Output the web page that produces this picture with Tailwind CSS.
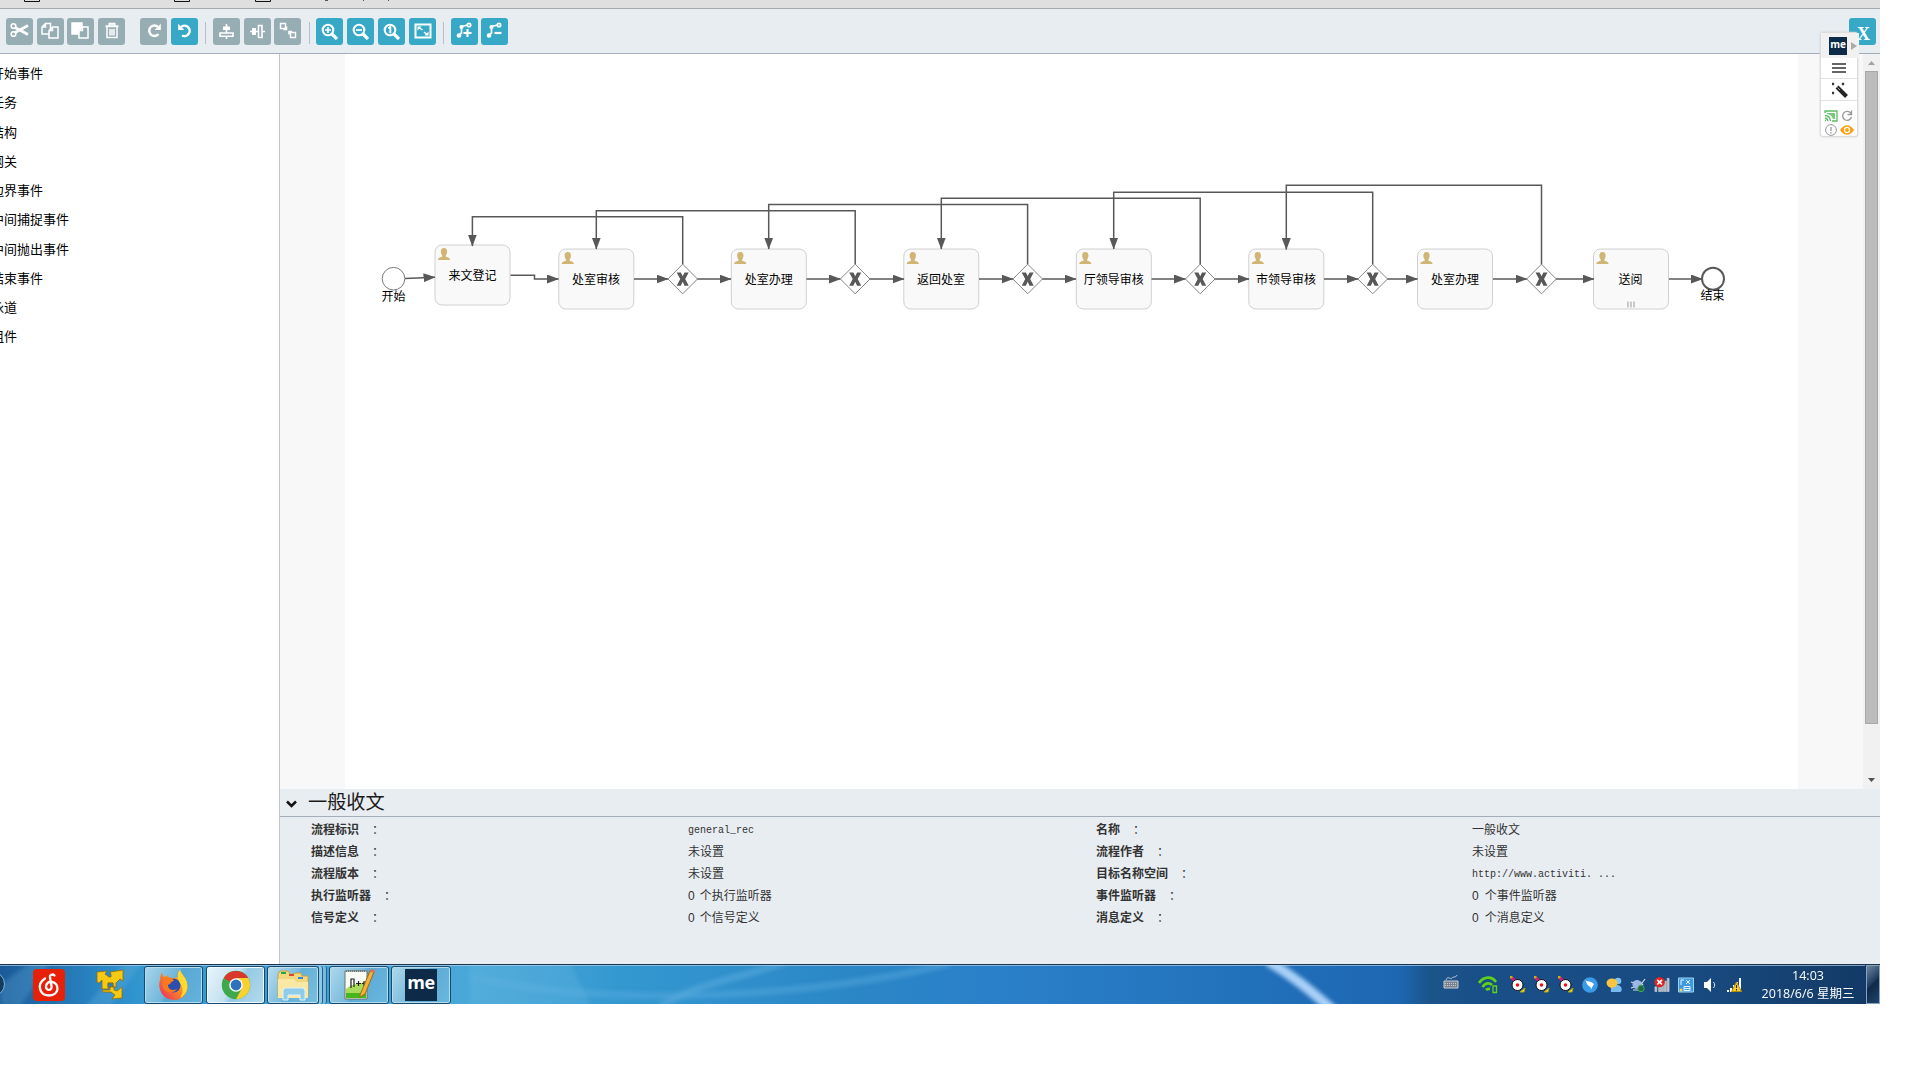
<!DOCTYPE html>
<html lang="zh-CN">
<head>
<meta charset="utf-8">
<title>一般收文</title>
<script src="https://cdn.jsdelivr.net/npm/@tailwindcss/browser@4"></script>
</head>
<body class="w-[1920px] h-[1080px] overflow-hidden bg-white font-['Liberation_Sans','Noto_Sans_CJK_SC',sans-serif] text-black">
<div class="relative w-[1880px] h-[1004px] flex flex-col overflow-hidden">

  <!-- bottom edge of the browser's bookmark bar -->
  <div class="h-[9px] shrink-0 bg-[#dfdfdf] border-b border-[#a3a9ae]">
    <svg class="block" width="420" height="8" fill="none" stroke="#111"><path d="M24.500-3V1.500h15V-3M174.500-3V1.500h15V-3M255.500-3V1.500h15V-3"/><path d="M325 .5h3M363.500 0v1M388.500 0v1" stroke="#54506a"/></svg>
  </div>

  <!-- toolbar -->
  <div class="h-[45px] shrink-0 bg-[#e8edf1] border-b border-[#a4adba] flex items-start justify-between pt-[9px] pl-[6px] pr-1">
    <div class="flex items-start text-white">
      <div class="w-[27px] h-[27px] pb-[2px] rounded-[3px] bg-[#95adb3] flex items-center justify-center mr-1"><svg width="19" height="17" viewBox="0 0 19 17" fill="none" stroke="#fff" stroke-width="2"><circle cx="3.500" cy="4" r="2.300" stroke-width="1.600"/><circle cx="3.500" cy="12" r="2.300" stroke-width="1.600"/><path d="M5 5.500 18 12.500M5 10.500 18 3.500" stroke-width="2.800"/></svg></div>
      <div class="w-[27px] h-[27px] pb-[2px] pr-[2px] rounded-[3px] bg-[#95adb3] flex items-center justify-center mr-[3px]"><svg width="18" height="18" viewBox="0 0 18 18" fill="#95adb3" stroke="#fff" stroke-width="1.500"><path d="M4.500 1.500H9.500V12H1V5zM4.500 1.500V5H1"/><path d="M11.500 5H17V16H8V8.500zM11.500 5V8.500H8"/></svg></div>
      <div class="w-[27px] h-[27px] pb-[2px] pr-[2px] rounded-[3px] bg-[#95adb3] flex items-center justify-center mr-1"><svg width="18" height="18" viewBox="0 0 18 18" fill="#95adb3" stroke="#fff" stroke-width="1.500"><path d="M1 1h10v11H1z" fill="#fff"/><path d="M11.500 5H17V16H8V8.500zM11.500 5V8.500H8"/></svg></div>
      <div class="w-[27px] h-[27px] pb-[2px] rounded-[3px] bg-[#95adb3] flex items-center justify-center mr-[15px]"><svg width="16" height="18" viewBox="0 0 16 18" fill="none" stroke="#fff" stroke-width="1.500"><path d="M1.500 4.200h13M5.500 4V1.700h5V4" stroke-width="2"/><path d="M3 5v10.500h10V5M6 7v6.500M8 7v6.500M10 7v6.500"/></svg></div>
      <div class="w-[27px] h-[27px] pb-[2px] rounded-[3px] bg-[#95adb3] flex items-center justify-center mr-1"><svg width="16" height="16" viewBox="0 0 16 16" fill="none" stroke="#fff" stroke-width="2.500"><path d="M12.500 4.500A5.200 5.200 0 1 0 12.500 11"/><path d="M14.800.8V7H8.600z" fill="#fff" stroke="none"/></svg></div>
      <div class="w-[27px] h-[27px] pb-[2px] rounded-[3px] bg-[#37a8c6] flex items-center justify-center mr-[7px]"><svg width="16" height="16" viewBox="0 0 16 16" fill="none" stroke="#fff" stroke-width="2.500"><path d="M3.500 4.500A5.200 5.200 0 1 1 5 12.500"/><path d="M1.200.8V7h6.200z" fill="#fff" stroke="none"/></svg></div>
      <div class="w-px h-[22px] mt-1 mr-[7px] bg-[#b8bfc9]"></div>
      <div class="w-[27px] h-[27px] pb-px rounded-[3px] bg-[#95adb3] flex items-center justify-center mr-1"><svg width="15" height="15" viewBox="0 0 15 15" fill="none" stroke="#fff" stroke-width="1.600"><path d="M7.500 0v9M7.500 12.500V15"/><path d="M4 2.500h7v3.500H4z" fill="#fff" stroke="none"/><path d="M1 9h13v3.300H1z"/></svg></div>
      <div class="w-[27px] h-[27px] pb-px rounded-[3px] bg-[#95adb3] flex items-center justify-center mr-[3px]"><svg width="15" height="15" viewBox="0 0 15 15" fill="none" stroke="#fff" stroke-width="1.600"><path d="M0 7.500h8M12 7.500h3"/><path d="M2 4h4v7H2z" fill="#fff" stroke="none"/><path d="M8.500 1.500h3.500v12H8.500z"/></svg></div>
      <div class="w-[27px] h-[27px] pb-[2px] rounded-[3px] bg-[#95adb3] flex items-center justify-center mr-2"><svg width="18" height="17" viewBox="0 0 18 17" fill="none" stroke="#fff" stroke-width="1.400"><path d="M1.500 1.500h5v5h-5zM11.500 10.500h5v5h-5z"/><path d="M4.500 7.500h3v-3M10 12.500v-3h3" stroke-width="1.600"/></svg></div>
      <div class="w-px h-[22px] mt-1 mr-[6px] bg-[#b8bfc9]"></div>
      <div class="w-[27px] h-[27px] pb-px rounded-[3px] bg-[#37a8c6] flex items-center justify-center mr-1"><svg width="17" height="17" viewBox="0 0 17 17" fill="none" stroke="#fff"><circle cx="7" cy="7" r="5.300" stroke-width="2.100"/><path d="m11 11 5 5" stroke-width="3.200"/><path d="M7 4v6M4 7h6" stroke-width="1.700"/></svg></div>
      <div class="w-[27px] h-[27px] pb-px rounded-[3px] bg-[#37a8c6] flex items-center justify-center mr-1"><svg width="17" height="17" viewBox="0 0 17 17" fill="none" stroke="#fff"><circle cx="7" cy="7" r="5.300" stroke-width="2.100"/><path d="m11 11 5 5" stroke-width="3.200"/><path d="M4 7h6" stroke-width="1.700"/></svg></div>
      <div class="w-[27px] h-[27px] pb-px rounded-[3px] bg-[#37a8c6] flex items-center justify-center mr-1"><svg width="17" height="17" viewBox="0 0 17 17" fill="none" stroke="#fff"><circle cx="7" cy="7" r="5.300" stroke-width="2.100"/><path d="m11 11 5 5" stroke-width="3.200"/><path d="M5.300 5.300 7.300 4V10.300" stroke-width="1.900"/></svg></div>
      <div class="w-[27px] h-[27px] pb-[2px] rounded-[3px] bg-[#37a8c6] flex items-center justify-center mr-[7px]"><svg width="18" height="16" viewBox="0 0 18 16" fill="none" stroke="#fff" stroke-width="2"><path d="M1.500 1.500h15v13h-15z"/><path d="m5 4.500 3.500 2.500M10 9l3 2.500" stroke-width="1.500"/><path d="M3.500 3.500h4l-4 4zM14.500 12.500h-4l4-4z" fill="#fff" stroke="none"/></svg></div>
      <div class="w-px h-[22px] mt-1 mr-[7px] bg-[#b8bfc9]"></div>
      <div class="w-[27px] h-[27px] pb-[2px] rounded-[3px] bg-[#37a8c6] flex items-center justify-center mr-[3px]"><svg width="17" height="17" viewBox="0 0 17 17" fill="none" stroke="#fff" stroke-width="1.700"><path d="M3 13 5.500 11V4.500L12 3"/><circle cx="13" cy="3" r="1.700" fill="#37a8c6"/><circle cx="3" cy="13.500" r="1.500" fill="#fff"/><circle cx="5.500" cy="5" r="1.200" fill="#fff"/><path d="M11.500 7v8M7.500 11h8" stroke-width="2.200"/></svg></div>
      <div class="w-[27px] h-[27px] pb-[2px] rounded-[3px] bg-[#37a8c6] flex items-center justify-center"><svg width="17" height="17" viewBox="0 0 17 17" fill="none" stroke="#fff" stroke-width="1.700"><path d="M3 13 5.500 11V4.500L12 3"/><circle cx="13" cy="3" r="1.700" fill="#37a8c6"/><circle cx="3" cy="13.500" r="1.500" fill="#fff"/><circle cx="5.500" cy="5" r="1.200" fill="#fff"/><path d="M8.500 11h7" stroke-width="2.200"/></svg></div>
    </div>
    <div class="w-[27px] h-[27px] rounded-[3px] bg-[#37a8c6] flex items-center justify-center pt-[4px] pl-[2px] text-white font-['Liberation_Serif',serif] font-bold text-[18px] leading-none">X</div>
  </div>

  <!-- main area -->
  <div class="flex h-[910px] shrink-0">
    <div class="w-[280px] shrink-0 border-r border-[#c3c6cc] overflow-hidden pt-[5px] text-[13px] leading-[29.250px] whitespace-nowrap">
      <div class="-ml-[9px]">
        <div>开始事件</div><div>任务</div><div>结构</div><div>网关</div><div>边界事件</div><div>中间捕捉事件</div><div>中间抛出事件</div><div>结束事件</div><div>泳道</div><div>组件</div>
      </div>
    </div>

    <div class="flex flex-col flex-1">
      <div class="flex h-[735px] shrink-0 bg-[#f8f8f8]">
        <div class="w-[1583px] pl-[65px]">
          <!-- process diagram; user units are window pixels -->
          <svg class="block bg-white" width="1453" height="735" viewBox="345 54 1453 735" font-family="'Liberation Sans','Noto Sans CJK SC',sans-serif" font-size="12" text-anchor="middle">
            <defs>
              <marker id="a" markerWidth="12" markerHeight="9" refX="11.500" refY="4.500" orient="auto" markerUnits="userSpaceOnUse"><path d="M0 0 12 4.500 0 9z" fill="#585858"/></marker>
              <g id="t"><rect x=".5" y=".5" width="75" height="60" rx="7" fill="#f9f9f9" stroke="#d0d0d0"/><path d="M3.500 15.500c0-2.500 2-2.300 4-3.300.6-.4.400-1-.2-1.800C6 8.600 5.500 3.500 9.500 3.500s3.500 5.100 2.200 6.900c-.6.800-.8 1.400-.2 1.800 2 1 4 .8 4 3.300z" fill="#d1b575"/></g>
              <g id="g"><path d="M0-14.800 14.800 0 0 14.800-14.800 0z" fill="#fff" stroke="#858585"/><path d="M-6-6.500h4.200L0-2.700 1.900-6.500H6L2.500 0 6 6.800H1.900L0 2.800l-1.900 4H-6L-2.500 0z" fill="#585858"/></g>
            </defs>
            <use href="#t" x="434.500" y="244.500"/><use href="#t" x="558.300" y="248.500"/><use href="#t" x="730.800" y="248.500"/><use href="#t" x="903.300" y="248.500"/><use href="#t" x="1075.800" y="248.500"/><use href="#t" x="1248.300" y="248.500"/><use href="#t" x="1417" y="248.500"/><use href="#t" x="1593" y="248.500"/>
            <g fill="none" stroke="#585858" stroke-width="1.500">
              <path d="M405 278.400 435 277.300" marker-end="url(#a)"/><path d="M510.500 275.300h24v3.700h24" marker-end="url(#a)"/>
              <path d="M634 279h34" marker-end="url(#a)"/><path d="M697 279h34" marker-end="url(#a)"/>
              <path d="M806.500 279h34" marker-end="url(#a)"/><path d="M870 279h34" marker-end="url(#a)"/>
              <path d="M979 279h34" marker-end="url(#a)"/><path d="M1042 279h34" marker-end="url(#a)"/>
              <path d="M1151.500 279h34" marker-end="url(#a)"/><path d="M1215 279h34" marker-end="url(#a)"/>
              <path d="M1324 279h34" marker-end="url(#a)"/><path d="M1387 279h30.500" marker-end="url(#a)"/>
              <path d="M1493 279h34" marker-end="url(#a)"/><path d="M1556 279h38" marker-end="url(#a)"/><path d="M1669 279h33.500" marker-end="url(#a)"/>
              <path d="M682.700 264.500V216.800H472.400V246" marker-end="url(#a)"/><path d="M855.200 264.500V210.800H596.300V249" marker-end="url(#a)"/>
              <path d="M1027.600 264.500V204.600H768.700V249" marker-end="url(#a)"/><path d="M1200.200 264.500V198.200H941.300V249" marker-end="url(#a)"/>
              <path d="M1372.700 264.500V192.200H1113.700V249" marker-end="url(#a)"/><path d="M1541.500 264.500V185.200H1286.300V249.500" marker-end="url(#a)"/>
            </g>
            <use href="#g" x="682.700" y="279"/><use href="#g" x="855.200" y="279"/><use href="#g" x="1027.700" y="279"/><use href="#g" x="1200.200" y="279"/><use href="#g" x="1372.700" y="279"/><use href="#g" x="1541.500" y="279"/>
            <circle cx="393.500" cy="278.700" r="11.300" fill="#fff" stroke="#7a7a7a"/><circle cx="1713" cy="278.700" r="11" fill="#fff" stroke="#585858" stroke-width="2"/>
            <path d="M1628 301.500v6M1631 301.500v6M1634 301.500v6" stroke="#aaa" stroke-width="1.200"/>
            <text x="393.500" y="300.500">开始</text><text x="472.500" y="280">来文登记</text><text x="596" y="283.500">处室审核</text><text x="768.700" y="283.500">处室办理</text><text x="941" y="283.500">返回处室</text><text x="1113.700" y="283.500">厅领导审核</text><text x="1286" y="283.500">市领导审核</text><text x="1455" y="283.500">处室办理</text><text x="1630.500" y="283.500">送阅</text><text x="1712.500" y="299.500">结束</text>
          </svg>
        </div>
        <div class="w-[17px] bg-[#f1f1f1] flex flex-col items-center pt-[7px] pb-[7px]">
          <svg class="shrink-0" width="7" height="4"><path d="M0 4h7L3.500 0z" fill="#a3a3a3"/></svg>
          <div class="w-[13px] h-[653px] mt-[6px] bg-[#bcbcbc] border border-[#a8a8a8]"></div>
          <svg class="shrink-0 mt-auto" width="7" height="4"><path d="M0 0h7L3.500 4z" fill="#505050"/></svg>
        </div>
      </div>

      <!-- properties -->
      <div class="flex-1 bg-[#e8edf1] text-[#333]">
        <div class="h-[28px] border-b border-[#a4adba] flex items-center pl-[6px] text-[19.200px] leading-none text-[#1a1a1a]">
          <svg class="mr-[11px] mt-[2px]" width="11" height="8" viewBox="0 0 11 8" fill="none" stroke="#111" stroke-width="2.500"><path d="M1 1.500 5.500 6 10 1.500"/></svg><span class="pt-px">一般收文</span>
        </div>
        <div class="grid grid-cols-[377px_408px_376px_1fr] pl-[31px] pt-[2px] text-[12px] leading-[22px] whitespace-nowrap">
          <div class="font-bold">流程标识<span class="ml-[13px] font-normal">：</span></div><div class="font-['Liberation_Mono',monospace] text-[10px] leading-[23px] h-[22px]">general_rec</div>
          <div class="font-bold">名称<span class="ml-[13px] font-normal">：</span></div><div>一般收文</div>
          <div class="font-bold">描述信息<span class="ml-[13px] font-normal">：</span></div><div>未设置</div>
          <div class="font-bold">流程作者<span class="ml-[13px] font-normal">：</span></div><div>未设置</div>
          <div class="font-bold">流程版本<span class="ml-[13px] font-normal">：</span></div><div>未设置</div>
          <div class="font-bold">目标名称空间<span class="ml-[13px] font-normal">：</span></div><div class="font-['Liberation_Mono',monospace] text-[10px] leading-[23px] h-[22px]">http://www.activiti. ...</div>
          <div class="font-bold">执行监听器<span class="ml-[13px] font-normal">：</span></div><div>0<span class="ml-[5px]">个执行监听器</span></div>
          <div class="font-bold">事件监听器<span class="ml-[13px] font-normal">：</span></div><div>0<span class="ml-[6px]">个事件监听器</span></div>
          <div class="font-bold">信号定义<span class="ml-[13px] font-normal">：</span></div><div>0<span class="ml-[5px]">个信号定义</span></div>
          <div class="font-bold">消息定义<span class="ml-[13px] font-normal">：</span></div><div>0<span class="ml-[6px]">个消息定义</span></div>
        </div>
      </div>
    </div>
  </div>

  <!-- taskbar -->
  <div class="relative h-10 shrink-0 border-t border-[#1c3350] bg-[linear-gradient(90deg,#1b5a98_0,#2a86c4_100px,#3296cf_140px,#4aa8d8_470px,#3498d0_620px,#2b86c6_860px,#2a80c9_1000px,#2171ba_1250px,#1e66b2_1400px,#1a5489_1430px,#194f88_1480px,#184a80_1700px,#133a66_1862px)]">
    <svg class="absolute inset-0" width="1880" height="39" fill="none">
      <defs><filter id="b" x="-20%" y="-20%" width="140%" height="140%"><feGaussianBlur stdDeviation="2"/></filter></defs>
      <g filter="url(#b)"><path d="M1268-4C1298 14 1315 30 1334 46" stroke="#a9d0f8" stroke-width="10"/><path d="M660 42C695 18 740 14 785-3" stroke="#5fb0e0" stroke-width="7" opacity=".5"/><path d="M470 12C620 45 830 30 950-2" stroke="#5fb0e0" stroke-width="7" opacity=".4"/><path d="m570-2 22 44H470V-2z" fill="#6dbde3" opacity=".25"/><path d="M20 42 50-2H30L0 20v20zM85 42 125-3h18L110 42z" fill="#75bde5" opacity=".25"/></g>
      <path d="M0 .5h1865" stroke="#b7d9f2" opacity=".65"/>
      <circle cx="-8" cy="19" r="12.500" fill="#143c5f" stroke="#79b6da"/>
    </svg>
    <div class="relative flex h-full items-center">
      <div class="ml-[33px] w-8 h-8 rounded-[4px] bg-[#e72008] flex items-center justify-center"><svg width="24" height="26" viewBox="0 0 24 26" fill="none" stroke="#fff" stroke-width="2.300" stroke-linecap="round"><path d="M17.500 3.500c-2-2-5-.5-4.500 2l1.600 9c.5 4.500-5.800 4.500-5.600 0 .2-3.500 3-5 6-4.700 7.500 1 8 13.700-3 13.700C2 23.500-.5 12 8 6.500"/></svg></div>
      <svg class="ml-[31px] mr-[20px]" width="28" height="32" viewBox="0 0 28 32" fill="#f6c915" stroke="#8f6c0a" stroke-width=".8"><path d="M1 3 11 2 9 5l4 3h2V5l-1-2 13-2v11l-3-2-4 4v4h-3v-4h-5v6H6v-9l-3 3-2-1zM6 21h8v-4h4v4l3 1 5-4v11l-10 1 3-4-4-3H7z"/><path d="M12 14h5v4h-5z" fill="#2b83bd"/></svg>
      <div class="w-[59px] h-[38px] rounded-[3px] border border-[#17496f] bg-[linear-gradient(120deg,#a9d5ea,#70b7db_45%,#56a8d4_50%,#64b3dc)] shadow-[inset_0_0_0_1px_#b6ddee] flex items-center justify-center"><svg width="32" height="32" viewBox="0 0 32 32"><defs><linearGradient id="f" x1="1" y1="0" x2="0" y2="1"><stop offset="0" stop-color="#ffdc2e"/><stop offset=".45" stop-color="#ff8f1c"/><stop offset="1" stop-color="#e6246a"/></linearGradient></defs><path d="M4 3c0 2 1 4 2 5l5-2c-1 2-1 3 0 4L20 8C19 5 20 3 22 1c1 3 3 5 5 8 6 10 1 22-11 22C5 31-1 20 2 11c0-3 1-6 2-8z" fill="url(#f)"/><circle cx="15.500" cy="16.500" r="7" fill="#2a4fae"/><path d="M7 9c4-2 8 0 9 3-2 0-3 1-3 2l-3 2c0 5 5 6 9 4-3 5-12 4-14-2-1-4 0-7 2-9z" fill="#fb7a1e"/><path d="M22 1c1 3 3 5 5 8 5 9 1 17-5 20 4-6 3-11 0-15-3-5-3-9 0-13z" fill="#ffd930"/></svg></div>
      <div class="ml-[3px] w-[59px] h-[38px] rounded-[3px] border border-[#17496f] bg-[linear-gradient(120deg,#eaf5fb,#c3e1f0_45%,#94c9e4_55%,#b5dcee)] shadow-[inset_0_0_0_1px_#f2fafd] flex items-center justify-center"><svg width="30" height="30" viewBox="0 0 30 30"><circle cx="15" cy="15" r="14.200" fill="#3fa84b"/><path d="M15 15 2.700 8A14.200 14.200 0 0 1 27.300 8H15z" fill="#d9382a"/><path d="M15 8h12.300A14.200 14.200 0 0 1 15 29.200L21 18z" fill="#fbd12f"/><circle cx="15" cy="15" r="6.800" fill="#fff"/><circle cx="15" cy="15" r="5.400" fill="#2f71bd"/></svg></div>
      <div class="ml-[2px] flex h-[38px]">
        <div class="w-[52px] rounded-[3px] border border-[#17496f] bg-[linear-gradient(120deg,#b8ddee,#7cbcdd_45%,#64b0d8_50%,#79bfe1)] shadow-[inset_0_0_0_1px_#c0e1f0] flex items-center justify-center"><svg width="34" height="32" viewBox="0 0 34 32"><path d="M2 5 4 2h8l2 3h4l1-1h6l1 3h6v21H2z" fill="#f1d77e" stroke="#c9a44a"/><path d="M2 10h16l2 3h12v16H2z" fill="#f9e7a4"/><path d="M5 4h5" stroke="#1ea84c" stroke-width="2"/><path d="M13 6h5" stroke="#d64b34" stroke-width="2"/><path d="M22 9h5" stroke="#3887d0" stroke-width="2"/><path d="M7 31V21l2-2h18l2 2v10h-5v-5H12v5z" fill="#8fcbeb" stroke="#dff3fc"/></svg></div>
        <div class="w-1 rounded-r-[3px] border-r border-[#20628d] bg-[#8fc8e4]"></div><div class="w-1 rounded-r-[3px] border-r border-[#20628d] bg-[#77bade]"></div>
      </div>
      <div class="ml-[2px] w-[60px] h-[38px] rounded-[3px] border border-[#17496f] bg-[linear-gradient(120deg,#b0d8eb,#77badc_45%,#5cabd6_50%,#6ab7de)] shadow-[inset_0_0_0_1px_#b6ddee] flex items-center justify-center"><svg class="ml-[-1px]" width="34" height="33" viewBox="0 0 34 33"><path d="M3 3h22v28H3z" fill="#f7fbf5" stroke="#6a7466"/><path d="M4 21C12 14 18 17 24 13v17H4z" fill="#a8dc5a"/><path d="M4 25h20v5H4z" fill="#45b71d"/><path d="M4 3h20" stroke="#777" stroke-width="2" stroke-dasharray="1 1"/><path d="M9 20v-9h3v8M14 15.500h5M16.500 13v5M20 15.500h4M22 13v5" fill="none" stroke="#222" stroke-width="1.200"/><path d="M18 27 28 3l4 1-9 22-5 3z" fill="#f3b23a" stroke="#a06a17"/><path d="M28 3l1-2 4 1-1 3z" fill="#e76b57"/></svg></div>
      <div class="ml-[2px] w-[60px] h-[38px] rounded-[3px] border border-[#17496f] bg-[linear-gradient(120deg,#b0d8eb,#77badc_45%,#5cabd6_50%,#6ab7de)] shadow-[inset_0_0_0_1px_#b6ddee] flex items-center justify-center"><div class="w-8 h-8 bg-[#0d2a48] text-white font-['Open_Sans'] font-bold text-[18px] leading-[27px] text-center tracking-tight">me</div></div>

      <!-- tray -->
      <div class="ml-auto flex items-center h-full">
        <svg class="mr-[19px] mb-[5px]" width="16" height="15" viewBox="0 0 16 15" fill="none" stroke="#c8cdd2"><path d="M3 5c2-5 4 0 6-2s4 0 5-3"/><path d="M1 6h14v7H1z" fill="#77828e"/><path d="M2 8.500h12M2 10.500h12" stroke-dasharray="1 1"/></svg>
        <svg class="mr-[12px]" width="20" height="18" viewBox="0 0 20 18" fill="none" stroke="#5fd317" stroke-width="2.700"><path d="M1 7C6 0 14 0 18 6M4.500 11C8 6 12 7 14 9M8 14c2-2 3-1 4-1"/><path d="M15 10h3.500v6.500H15z" stroke-width="1.300"/></svg>
        <svg class="mr-2" width="16" height="17" viewBox="0 0 16 17"><path d="m1 1 5 5" stroke="#e51773" stroke-width="3"/><path d="M0 0h2v2H0zM10 16l5-4-1 4z" fill="#ffe52a" stroke="#b0a015"/><circle cx="7.500" cy="9" r="5.500" fill="#fff" stroke="#111"/><circle cx="7.500" cy="9" r="1.800" fill="#e01818"/></svg>
        <svg class="mr-2" width="16" height="17" viewBox="0 0 16 17"><path d="m1 1 5 5" stroke="#e51773" stroke-width="3"/><path d="M0 0h2v2H0zM10 16l5-4-1 4z" fill="#ffe52a" stroke="#b0a015"/><circle cx="7.500" cy="9" r="5.500" fill="#fff" stroke="#111"/><circle cx="7.500" cy="9" r="1.800" fill="#e01818"/></svg>
        <svg class="mr-2" width="16" height="17" viewBox="0 0 16 17"><path d="m1 1 5 5" stroke="#e51773" stroke-width="3"/><path d="M0 0h2v2H0zM10 16l5-4-1 4z" fill="#ffe52a" stroke="#b0a015"/><circle cx="7.500" cy="9" r="5.500" fill="#fff" stroke="#111"/><circle cx="7.500" cy="9" r="1.800" fill="#e01818"/></svg>
        <svg class="mr-2" width="16" height="16" viewBox="0 0 16 16"><circle cx="8" cy="8" r="7.800" fill="#3b9be8"/><path d="M3.500 3.500c4 1 7.500 2 8.500 3.500l-1.500 2.500-1.500 3-.5-2.500C6 9 4.500 7 3.500 3.500z" fill="#fff"/></svg>
        <svg class="mr-2" width="16" height="16" viewBox="0 0 16 16"><circle cx="12" cy="4" r="3.300" fill="#7dc4f5"/><path d="M5 15c-1-5 3-7 7-7 4 1 5 6 2 7z" fill="#75bbf0"/><ellipse cx="6" cy="6" rx="5.500" ry="4.500" fill="#fbc541"/><path d="M4 9h4l-3 3z" fill="#fbc541"/></svg>
        <svg class="mr-2" width="16" height="16" viewBox="0 0 16 16"><path d="m1 5 3 1M1 11l3-1M12 6l3-4M10 5l3 3" stroke="#ddd" stroke-width="1.200"/><circle cx="7" cy="7.500" r="4.500" fill="#9db6e8"/><path d="M3 13h5" stroke="#ddd"/><circle cx="11" cy="11.500" r="3.200" fill="#27644a" stroke="#3fae4f"/></svg>
        <svg class="mr-2" width="16" height="17" viewBox="0 0 17 17"><path d="M1 16V11h2v5zM5 16V10h2v6zM8 16V8h2v8zM11 16V5h2v11zM14 16V2h2v14z" fill="#aeb4ba" stroke="#e8e8e8" stroke-width=".6"/><circle cx="6" cy="6" r="5.500" fill="#e42321"/><path d="m3.500 3.500 5 5M8.500 3.500l-5 5" stroke="#fff" stroke-width="1.800"/></svg>
        <svg class="mr-2" width="16" height="16" viewBox="0 0 16 16"><path d="M.5 1h15v14H.5z" fill="#3d9ae0" stroke="#9fd3f5"/><path d="M3 3v5M3 3h3M8 3l4 4M12 3 8 7M6 9.500h6v4H6zM6 11.500h6" stroke="#e9f6ff" fill="none"/><circle cx="3" cy="13" r="1.500" fill="#f4d54c"/></svg>
        <svg class="mr-2" width="16" height="16" viewBox="0 0 16 16"><path d="M2 5h3l4-4v14l-4-4H2z" fill="#fff"/><path d="M11.500 5c1.500 2 1.500 4 0 6" stroke="#e0e8f0" fill="none"/></svg>
        <svg class="mr-[19px]" width="16" height="16" viewBox="0 0 16 16"><path d="M1 15v-2h2v2zM4 15v-4h2v4zM7 15V8h2v7zM10 15V5h2v10zM13 15V1h2v14z" fill="#fff"/><path d="m10.500 5 5 9.500h-10z" fill="#f6cf22" stroke="#b68a10"/><path d="M10.500 8v3M10.500 12v1.500" stroke="#222"/></svg>
        <div class="w-[94px] text-center text-white font-['Open_Sans','Noto_Sans_CJK_SC',sans-serif] text-[12.500px] leading-[18px] whitespace-nowrap"><div>14:03</div><div>2018/6/6 星期三</div></div>
        <div class="ml-[11px] w-[14px] h-[39px] border border-[#8aa2b9] bg-[linear-gradient(135deg,#7087a0,#1c3c60_45%,#10294a_50%,#1d466f)]"></div>
      </div>
    </div>
  </div>

  <!-- floating extension panel -->
  <div class="absolute left-[1820px] top-[32px] w-[38px] h-[105px] bg-white border border-[#dcdcdc] rounded-[3px] shadow-[0_0_2px_#ccc]">
    <div class="h-[25px] w-[38px] bg-[#f1f1f1] flex items-center pl-2"><div class="w-[18px] h-[18px] bg-[#0d2a48] text-white font-['Open_Sans'] font-bold text-[10px] leading-[15px] text-center">me</div><svg class="ml-1" width="6" height="8"><path d="M0 0v8l6-4z" fill="#aaa"/></svg></div>
    <div class="h-[21px] border-b border-[#e2e2e2] flex items-center justify-center"><svg width="14" height="10" stroke="#333" stroke-width="1.500"><path d="M0 1h14M0 5h14M0 9h14"/></svg></div>
    <div class="h-[22px] border-b border-[#e2e2e2] flex items-center justify-center"><svg class="ml-[2px]" width="16" height="16" viewBox="0 0 16 16"><path d="m5 5 9.500 9.500" stroke="#252525" stroke-width="4"/><path d="m5.500 5.500 2.500 2.500" stroke="#aaa" stroke-width="1"/><path d="m0 1 2 2M2 1 0 3M10 1l2 2M12 1l-2 2M0 10l2 2M2 10l-2 2" stroke="#333" stroke-width="1.200"/></svg></div>
    <div class="grid grid-cols-2 gap-x-[2px] gap-y-[2px] pt-[9px] px-[3px] items-center justify-items-center">
      <svg width="14" height="12" viewBox="0 0 14 12" fill="none" stroke="#5cbd63" stroke-width="1.300"><path d="M1 3V1h12v10H8"/><path d="M3 3h8v6H9C8 6 6 4.500 3 4z" fill="#75cb79" stroke="none"/><path d="M1 5.500c3 0 5 2 5.500 5.500M1 8c1.500 0 2.500 1 3 3M1 10.500h1"/></svg>
      <svg width="12" height="12" viewBox="0 0 12 12" fill="none" stroke="#999" stroke-width="1.400"><path d="M10 3.500A4.500 4.500 0 1 0 10.500 7M10.500.5v4h-4"/></svg>
      <svg width="12" height="12" viewBox="0 0 12 12" fill="none" stroke="#999"><circle cx="6" cy="6" r="5.400"/><path d="M6 3v4M6 8v1.500" stroke-width="1.300"/></svg>
      <svg width="14" height="10" viewBox="0 0 14 10"><path d="M0 5C4-1.300 10-1.300 14 5 10 11.300 4 11.300 0 5z" fill="#ff9d0a"/><circle cx="7" cy="5" r="3.200" fill="#fff"/><circle cx="7" cy="5" r="1.900" fill="#ff9d0a"/></svg>
    </div>
  </div>
</div>
</body>
</html>
